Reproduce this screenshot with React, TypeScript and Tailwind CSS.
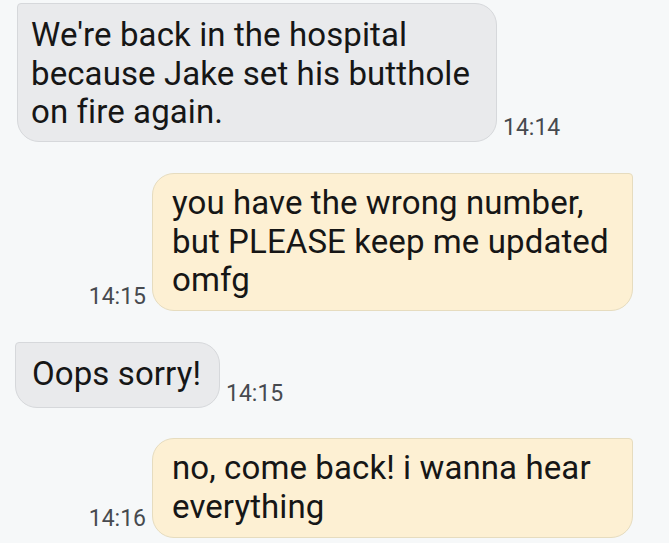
import React from "react";

const font = { fontFamily: "Roboto, 'Noto Sans', sans-serif" };

export default function App() {
  return (
    <div
      className="w-[669px] h-[543px] overflow-hidden bg-[#f6f8f9] text-[#161616]"
      style={font}
    >
      {/* message 1 */}
      <div className="flex items-end pl-[17px] pt-[3px]">
        <div className="w-[480px] h-[139px] bg-[#e9eaec] border border-[#d6d8db] rounded-[22px] rounded-tl-[4px] pl-[13px] pt-[12px] text-[33px] leading-[38.5px] whitespace-nowrap tracking-[0.1px]">
          We're back in the hospital
          <br />
          because Jake set his butthole
          <br />
          on fire again.
        </div>
        <div className="ml-[6px] mb-[1px] text-[23px] leading-[26px] text-[#474a4f]">14:14</div>
      </div>

      {/* message 2 */}
      <div className="flex items-end justify-end pr-[36px] mt-[31px]">
        <div className="mr-[6px] mb-[1px] text-[23px] leading-[26px] text-[#474a4f]">14:15</div>
        <div className="w-[481px] h-[138px] bg-[#fdf0d3] border border-[#e6dcbf] rounded-[22px] rounded-tr-[4px] pl-[19px] pt-[10px] text-[33px] leading-[38.5px] whitespace-nowrap tracking-[0.1px]">
          you have the wrong number,
          <br />
          but PLEASE keep me updated
          <br />
          omfg
        </div>
      </div>

      {/* message 3 */}
      <div className="flex items-end pl-[15px] mt-[31px]">
        <div className="w-[205px] h-[66px] bg-[#e9eaec] border border-[#d6d8db] rounded-[22px] rounded-tl-[4px] pl-[16px] pt-[12px] text-[33px] leading-[38px] whitespace-nowrap tracking-[0.1px]">
          Oops sorry!
        </div>
        <div className="ml-[6px] mb-[1px] text-[23px] leading-[26px] text-[#474a4f]">14:15</div>
      </div>

      {/* message 4 */}
      <div className="flex items-end justify-end pr-[36px] mt-[30px]">
        <div className="mr-[6px] mb-[6px] text-[23px] leading-[26px] text-[#474a4f]">14:16</div>
        <div className="w-[481px] h-[100px] bg-[#fdf0d3] border border-[#e6dcbf] rounded-[22px] rounded-tr-[4px] pl-[19px] pt-[10px] text-[33px] leading-[38.5px] whitespace-nowrap tracking-[0.1px]">
          no, come back! i wanna hear
          <br />
          everything
        </div>
      </div>
    </div>
  );
}
